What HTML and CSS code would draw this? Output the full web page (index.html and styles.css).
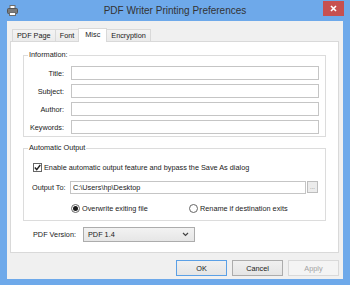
FILE: index.html
```html
<!DOCTYPE html>
<html lang="en">
<head>
    <meta charset="UTF-8">
    <title>PDF Writer Printing Preferences</title>
    <link rel="stylesheet" href="styles.css">
</head>
<body>
    <div class="window">
        <div class="titlebar">
            <div class="icon-box">
                <!-- little printer -->
                <svg width="11" height="11" viewBox="0 0 11 11">
                    <rect x="3" y="0.5" width="5" height="3" fill="#fff" stroke="#6d6d6d"/>
                    <rect x="0.5" y="3.5" width="10" height="5" rx="1" fill="#7a7a7a" stroke="#555"/>
                    <rect x="2.5" y="7.5" width="6" height="3" fill="#fff" stroke="#6d6d6d"/>
                </svg>
            </div>
            <div class="title">PDF Writer Printing Preferences</div>
            <div class="close">
                <svg width="7" height="7" viewBox="0 0 7 7">
                    <path d="M1 1 L6 6 M6 1 L1 6" stroke="#fff" stroke-width="1.6"/>
                </svg>
            </div>
        </div>

        <div class="client">
            <div class="tabs">
                <div class="tab">PDF Page</div>
                <div class="tab">Font</div>
                <div class="tab active">Misc</div>
                <div class="tab">Encryption</div>
            </div>

            <div class="panel">
                <fieldset class="group info">
                    <legend>Information:</legend>
                    <div class="info-grid">
                        <label>Title:</label><input type="text" class="field">
                        <label>Subject:</label><input type="text" class="field">
                        <label>Author:</label><input type="text" class="field">
                        <label>Keywords:</label><input type="text" class="field">
                    </div>
                </fieldset>

                <fieldset class="group output">
                    <legend>Automatic Output</legend>
                    <div class="check-row">
                        <span class="checkbox">
                            <svg width="7" height="7" viewBox="0 0 7 7">
                                <path d="M0.8 3.6 L2.7 5.6 L6.3 1" fill="none" stroke="#222" stroke-width="1.4"/>
                            </svg>
                        </span>
                        Enable automatic output feature and bypass the Save As dialog
                    </div>
                    <div class="path-row">
                        <label>Output To:</label>
                        <input type="text" class="field path" value="C:\Users\hp\Desktop">
                        <button class="browse">...</button>
                    </div>
                    <div class="radio-row">
                        <div class="radio-item"><span class="radio checked"></span>Overwrite exiting file</div>
                        <div class="radio-item"><span class="radio"></span>Rename if destination exits</div>
                    </div>
                </fieldset>

                <div class="version-row">
                    <label>PDF Version:</label>
                    <div class="select">
                        <span>PDF 1.4</span>
                        <svg width="7" height="5" viewBox="0 0 7 5">
                            <path d="M1 1 L3.5 3.5 L6 1" fill="none" stroke="#444" stroke-width="1.2"/>
                        </svg>
                    </div>
                </div>
            </div>

            <div class="buttons">
                <button class="btn default">OK</button>
                <button class="btn">Cancel</button>
                <button class="btn disabled">Apply</button>
            </div>
        </div>
    </div>
</body>
</html>
```

FILE: styles.css
```css
body {
    margin: 0;
    font-family: "Liberation Sans", Arial, sans-serif;
    font-size: 7.3px;
    color: #1a1a1a;
}
.window {
    width: 350px;
    height: 285px;
    background-color: #6ea9ea;
    display: flex;
    flex-direction: column;
    box-sizing: border-box;
}
.titlebar {
    height: 21px;
    display: flex;
    align-items: center;
}
.icon-box {
    width: 27px;
    padding-left: 7px;
    box-sizing: border-box;
    display: flex;
    align-items: center;
}
.title {
    flex: 1;
    text-align: center;
    font-size: 10px;
    color: #333;
}
.close {
    width: 21px;
    height: 15px;
    margin-right: 6px;
    align-self: flex-start;
    margin-top: 1px;
    background-color: #c75050;
    display: flex;
    align-items: center;
    justify-content: center;
}
.client {
    flex: 1;
    margin: 0 7px 6px 7px;
    background-color: #f0f0f0;
    padding: 6px 4px 0 3px;
    display: flex;
    flex-direction: column;
}
.tabs {
    display: flex;
    align-items: flex-end;
    margin-left: 2px;
    height: 14px;
}
.tab {
    height: 12px;
    line-height: 11px;
    padding: 0 4px;
    border: 1px solid #d9d9d9;
    border-bottom: none;
    border-right: none;
    box-sizing: border-box;
    background: linear-gradient(#f3f3f3, #ebebeb);
}
.tab:nth-child(4) {
    border-right: 1px solid #d9d9d9;
}
.tab.active {
    height: 14px;
    margin-bottom: -1px;
    line-height: 12px;
    background: #fff;
    border-right: 1px solid #d9d9d9;
    padding: 0 6px;
    position: relative;
    z-index: 1;
}
.tab.active + .tab {
    border-left: none;
}
.panel {
    height: 212px;
    box-sizing: border-box;
    background-color: #fff;
    border: 1px solid #d9d9d9;
    padding-top: 8px;
    padding-left: 12px;
}
.group {
    width: 303px;
    box-sizing: border-box;
    margin: 0;
    padding: 0;
    border: 1px solid #dcdcdc;
}
.group legend {
    padding: 0 1px;
    margin-left: 4px;
    line-height: 10px;
}
.info-grid {
    display: grid;
    grid-template-columns: 40px 248px;
    column-gap: 7px;
    row-gap: 4px;
    padding: 6px 0 2px 0;
    align-items: center;
}
.info-grid label {
    text-align: right;
}
.field {
    height: 14px;
    box-sizing: border-box;
    border: 1px solid #c5c5c5;
    margin: 0;
    padding: 0 2px;
    font-family: inherit;
    font-size: 7.3px;
    color: #1a1a1a;
    background: #fff;
    outline: none;
}
.output {
    margin-top: 6px;
}
.check-row {
    display: flex;
    align-items: center;
    padding: 9px 0 0 9px;
    height: 10px;
}
.checkbox {
    width: 9px;
    height: 9px;
    box-sizing: border-box;
    border: 1px solid #666;
    background: #fff;
    display: flex;
    align-items: center;
    justify-content: center;
    margin-right: 2px;
}
.path-row {
    display: flex;
    align-items: center;
    margin-top: 9px;
    padding-left: 8px;
    height: 13px;
}
.path-row label {
    width: 38px;
}
.field.path {
    width: 236px;
    height: 13px;
}
.browse {
    width: 11px;
    height: 12px;
    margin: 0 0 0 1px;
    padding: 0;
    border: 1px solid #bdbdbd;
    background: #ececec;
    color: #777;
    font-size: 6px;
    line-height: 8px;
    align-self: flex-start;
}
.radio-row {
    display: grid;
    grid-template-columns: 118px auto;
    margin-top: 9px;
    padding: 0 0 7px 47px;
}
.radio-item {
    display: flex;
    align-items: center;
    height: 10px;
}
.radio {
    width: 9px;
    height: 9px;
    box-sizing: border-box;
    border: 1px solid #666;
    border-radius: 50%;
    background: #fff;
    margin-right: 2px;
    display: flex;
    align-items: center;
    justify-content: center;
}
.radio.checked::after {
    content: "";
    width: 5px;
    height: 5px;
    border-radius: 50%;
    background: #1a1a1a;
}
.version-row {
    display: flex;
    align-items: center;
    margin-top: 6px;
    padding-left: 10px;
}
.version-row label {
    width: 50px;
}
.select {
    width: 112px;
    height: 15px;
    box-sizing: border-box;
    border: 1px solid #acacac;
    background: linear-gradient(#f2f2f2, #e6e6e6);
    display: flex;
    align-items: center;
    justify-content: space-between;
    padding: 0 5px 0 4px;
}
.buttons {
    display: flex;
    justify-content: flex-end;
    gap: 5px;
    margin-top: 7px;
}
.btn {
    width: 51px;
    height: 16px;
    margin: 0;
    padding: 0;
    border: 1px solid #acacac;
    background: linear-gradient(#f0f0f0, #e5e5e5);
    font-family: inherit;
    font-size: 7.3px;
    color: #1a1a1a;
}
.btn.default {
    border-color: #5ba0e6;
}
.btn.disabled {
    border-color: #d9d9d9;
    background: #f4f4f4;
    color: #a3a3a3;
}
```
